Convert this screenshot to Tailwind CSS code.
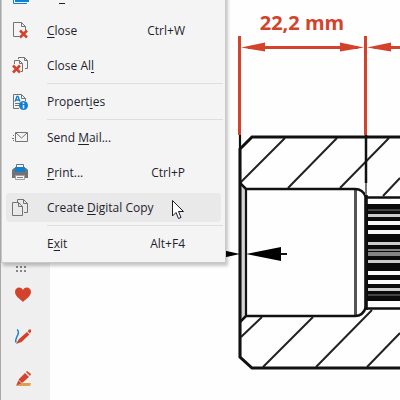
<!DOCTYPE html>
<html lang="en">
<head>
  <meta charset="utf-8">
  <meta name="viewport" content="width=device-width, initial-scale=1">
  <title>Drawing</title>
  <script src="https://cdn.jsdelivr.net/npm/@tailwindcss/browser@4"></script>
</head>
<body class="h-screen overflow-hidden bg-[#fefefe] font-['Open_Sans','Noto_Sans',sans-serif] text-xs text-[#1f1f2e]">
  <div class="relative flex h-full overflow-hidden">
    <!-- tool bar -->
    <aside class="flex w-[50px] flex-none flex-col items-start justify-end gap-6 border-l border-[#a9a9a9] bg-[#efefef] pb-3 pl-[13px]">
      <svg class="-mb-3 h-2.5 w-3.5" viewBox="0 0 14 10" fill="#858585">
        <path d="M2 2h2v2H2zM6 2h2v2H6zM10 2h2v2h-2zM2 6h2v2H2zM6 6h2v2H6zM10 6h2v2h-2z" />
      </svg>
      <button class="h-[18px] w-[18px]" aria-label="Favorites">
        <svg viewBox="0 0 18 18" fill="#d3432b"><path d="M9 16C6 13 1 10 1 6c0-5 6-6 8-2 2-4 8-3 8 2 0 4-5 7-8 10z" /></svg>
      </button>
      <button class="h-[18px] w-[18px]" aria-label="Draw">
        <svg viewBox="0 0 18 18">
          <path d="M3 1.500c3 2 1 5 0 7-1 2-2 4-1 6" fill="none" stroke="#1080d0" stroke-width="1.400" />
          <path d="M5 11l8-7 2.500 2.500-8 7.500L2 16zM13.700 3.300L15 1.500h2v2l-1 2z" fill="#d3432b" />
        </svg>
      </button>
      <button class="h-[18px] w-[18px]" aria-label="Highlight">
        <svg viewBox="0 0 18 18">
          <path d="M7 13h10l-1 3H3z" fill="#dfa04c" />
          <path d="M5 9l6-6 4 4-7 6-6 3zM12 2l1-1 4 3-1 2z" fill="#d3432b" />
          <path d="M4.500 10l3.500 3.500" stroke="#efefef" stroke-width=".8" />
        </svg>
      </button>
    </aside>

    <!-- drawing -->
    <main class="relative min-w-0 flex-1 overflow-hidden">
      <svg class="absolute left-0 top-0 h-[400px] w-[350px]" viewBox="50 0 350 400" fill="none" stroke="#111">
        <g stroke-width="2" stroke="#222">
          <path d="M240 183l45-45M288 188l49-50M340 188l49-50M383 196l17-18M241 337l21-20M263 367l50-50M316 367l56-57M367 367l33-34" />
          <path d="M355.500 190v125" stroke="#555" stroke-width="3" />
        </g>
        <path d="M243 188v130" stroke="#d4d4d4" stroke-width="5" />
        <path d="M400 137H252l-12 12v208l12 11h148" stroke-width="3" />
        <path d="M240 135v222M246 189v127" stroke-width="2.200" />
        <path d="M240 183l6 6h109c5 0 9 3 11 8v110c-2 6-6 9-11 9H246l-6 6" stroke-width="2.500" />
        <path d="M366 135v48" stroke-width="2.500" />
        <path d="M366 183v14" stroke="#777" stroke-width="2" />
        <path d="M366 195v115" stroke-width="3.500" />
        <path d="M366 197.500h34M366 308.500h34" stroke-width="2.500" />
        <g stroke="none">
          <path d="M367 204h33v97h-33z" fill="#0b0b0b" />
          <path d="M368 221h32v4h-32zM368 230h32v4h-32zM368 271h32v4h-32zM368 280h32v4h-32z" fill="#fafafa" />
          <path d="M368 214h32v3h-32zM368 242h32v3h-32zM368 260h32v3h-32zM368 288h32v3h-32z" fill="#ccc" />
          <path d="M368 209h32v2h-32zM368 294h32v2h-32z" fill="#444" />
          <path d="M368 249h32v2h-32zM368 252h32v4h-32z" fill="#848484" />
          <path d="M246 254l35-7v14zM240 254l-18-4v8z" fill="#000" />
        </g>
        <path d="M280 254h7" stroke-width="2" />
        <g stroke="#d3432b">
          <path d="M239.500 36v99M365.500 36v99" stroke-width="3" />
          <path d="M248 47.500h110M374 47.500h26" stroke-width="3" />
          <path d="M241 47.500l24-5v9zM364 47.500l-24-5v9zM367 47.500l24-5v9z" fill="#d3432b" stroke="none" />
        </g>
        <text x="302" y="30" text-anchor="middle" font-family="Open Sans, sans-serif" font-size="20" font-weight="700" fill="#d3432b" stroke="none">22,2 mm</text>
      </svg>
    </main>

    <!-- file menu, scrolled past its first entries -->
    <nav class="absolute -top-[23px] left-px w-[225px] border border-[#c9c9c9] bg-[#f4f4f4] pb-px shadow-[2px_3px_3px_#00000038]" aria-label="File">
      <button class="flex h-[35px] w-full items-center pl-2.5 text-left" aria-label="Save">
        <svg class="mr-[29px] h-[18px] w-[18px]" viewBox="0 0 18 18" fill="none" stroke="#1080d0"><path d="M1.500 4v12.500H15" /><path d="M4 1h12v13H4z" stroke-width="2" /></svg>
        <span class="h-4 w-1.5 border-b border-[#1f1f2e]"></span>
      </button>
      <button class="flex h-[35px] w-full items-center pl-2.5 pr-10 text-left">
        <svg class="mr-[17px] h-[18px] w-[18px]" viewBox="0 0 18 18" fill="none">
          <path d="M7.500 14.500h-6v-14h8l4 4v4M9.500.500v4h4" stroke="#737373" />
          <path d="M8 8.500l7 7M15 8.500l-7 7" stroke="#d3432b" stroke-width="2.500" />
        </svg>
        <span class="flex-1"><u class="underline-offset-2">C</u>lose</span><span>Ctrl+W</span>
      </button>
      <button class="flex h-[35px] w-full items-center pl-2.5 text-left">
        <svg class="mr-[17px] h-[18px] w-[18px]" viewBox="0 0 18 18" fill="none">
          <path d="M2.500 7V3.500h5l3 3v8H9M7.500 3.500v3h3M6.500 2V.500h6l3 3v8H13M12.500.500v3h3" stroke="#737373" />
          <path d="M1 8.500l7 7M8 8.500l-7 7" stroke="#d3432b" stroke-width="2.500" />
        </svg>
        <span>Close Al<u class="underline-offset-2">l</u></span>
      </button>
      <hr class="ml-[45px] mr-0.5 border-[#dedede]">
      <button class="flex h-[35px] w-full items-center pl-2.5 text-left">
        <svg class="mr-[17px] h-[18px] w-[18px]" viewBox="0 0 18 18" fill="none">
          <path d="M7 15.500H1.500v-14h8l4 4V8M9.500 1.500v4h4M3 10.500h5M3 12.500h4" stroke="#737373" />
          <path d="M3 8.500l2-5h1l2 5M4 7h3" stroke="#1080d0" stroke-width="1.300" />
          <circle cx="11.500" cy="12.500" r="4.500" fill="#1080d0" />
          <path d="M11.500 9.500V11M11.500 12v3.500" stroke="#fff" stroke-width="1.500" />
        </svg>
        <span>Propert<u class="underline-offset-2">i</u>es</span>
      </button>
      <hr class="ml-[45px] mr-0.5 border-[#dedede]">
      <button class="flex h-[35px] w-full items-center pl-2.5 text-left">
        <svg class="mr-[17px] h-[18px] w-[18px]" viewBox="0 0 18 18" fill="none" stroke="#737373">
          <path d="M3.500 3.500h12v9h-12zM4 4l5.500 5L15 4M1 6.500h1M0 9.500h2M1 11.500h1" />
        </svg>
        <span>Send <u class="underline-offset-2">M</u>ail...</span>
      </button>
      <button class="flex h-[35px] w-full items-center pl-2.5 pr-10 text-left">
        <svg class="mr-[17px] h-[18px] w-[18px]" viewBox="0 0 18 18" fill="none">
          <path d="M0 6l2-2h12l2 2v8H0z" fill="#737373" />
          <path d="M4.500 4V.500h7V4" fill="#f4f4f4" stroke="#737373" />
          <path d="M3 3h10v5H3z" fill="#1080d0" />
          <path d="M3.500 11.500h9v4h-9z" fill="#f4f4f4" stroke="#a0a0a0" />
          <path d="M5 13.500h6" stroke="#858585" />
        </svg>
        <span class="flex-1"><u class="underline-offset-2">P</u>rint...</span><span>Ctrl+P</span>
      </button>
      <div class="h-[35px] px-1 py-[3px]">
        <button class="flex h-[29px] w-full items-center rounded bg-[#e9e9e9] pl-1.5 text-left">
          <svg class="mr-[17px] h-[18px] w-[18px]" viewBox="0 0 18 18" fill="none" stroke="#737373">
            <path d="M5.500 3V.500h6l4 4v9H12M11.500.500v4h4M.500 3.500h6l4 4v9H.500zM6.500 3.500v4h4" />
          </svg>
          <span>Create <u class="underline-offset-2">D</u>igital Copy</span>
        </button>
      </div>
      <hr class="ml-[45px] mr-0.5 border-[#dedede]">
      <button class="flex h-[35px] w-full items-center pl-[45px] pr-10 text-left">
        <span class="flex-1">E<u class="underline-offset-2">x</u>it</span><span>Alt+F4</span>
      </button>
    </nav>

    <!-- mouse pointer -->
    <svg class="pointer-events-none absolute left-[172px] top-[200px] h-5 w-3.5" viewBox="0 0 14 20" fill="#fff" stroke="#1d1d2b">
      <path d="M.500.500v15.500l3.500-3.500 2.500 6 2.500-1-2.500-6h5z" />
    </svg>
  </div>
</body>
</html>
